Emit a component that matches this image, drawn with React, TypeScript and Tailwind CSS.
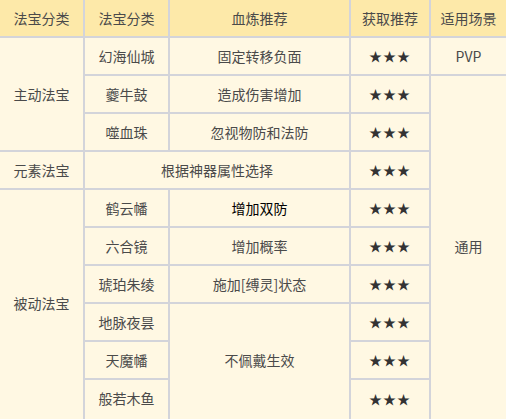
import React from "react";

const H = "bg-[#fde9a9] flex items-center justify-center";
const C = "bg-[#fff8e3] flex items-center justify-center";
const S = "text-[13px] tracking-[1px] text-[#333]";

export default function App() {
  return (
    <div
      className="w-[506px] h-[419px] overflow-hidden bg-[#fff8e3] text-[14px] text-[#4a4a4a]"
      style={{ fontFamily: '"Noto Sans CJK SC", "Noto Sans", sans-serif' }}
    >
      <div
        className="grid gap-[2px] bg-[#d3d4da]"
        style={{
          gridTemplateColumns: "83px 83px 179px 78px 1fr",
          gridTemplateRows: "36px repeat(10, 36px) 3px",
        }}
      >
        <div className={H}>法宝分类</div>
        <div className={H}>法宝分类</div>
        <div className={H}>血炼推荐</div>
        <div className={H}>获取推荐</div>
        <div className={H}>适用场景</div>

        {/* row 1 */}
        <div className={`${C} row-span-3`}>主动法宝</div>
        <div className={C}>幻海仙城</div>
        <div className={C}>固定转移负面</div>
        <div className={C}><span className={S}>★★★</span></div>
        <div className={C}>PVP</div>

        {/* row 2 */}
        <div className={C}>夔牛鼓</div>
        <div className={C}>造成伤害增加</div>
        <div className={C}><span className={S}>★★★</span></div>
        <div className={`${C} row-span-10`}>
          <span className="-mt-[4px]">通用</span>
        </div>

        {/* row 3 */}
        <div className={C}>噬血珠</div>
        <div className={C}>忽视物防和法防</div>
        <div className={C}><span className={S}>★★★</span></div>

        {/* row 4 */}
        <div className={C}>元素法宝</div>
        <div className={`${C} col-span-2`}>根据神器属性选择</div>
        <div className={C}><span className={S}>★★★</span></div>

        {/* row 5 */}
        <div className={`${C} row-span-7`}>
          <span className="-mt-[4px]">被动法宝</span>
        </div>
        <div className={C}>鹤云幡</div>
        <div className={`${C} text-black`}>增加双防</div>
        <div className={C}><span className={S}>★★★</span></div>

        {/* row 6 */}
        <div className={C}>六合镜</div>
        <div className={C}>增加概率</div>
        <div className={C}><span className={S}>★★★</span></div>

        {/* row 7 */}
        <div className={C}>琥珀朱绫</div>
        <div className={C}>施加[缚灵]状态</div>
        <div className={C}><span className={S}>★★★</span></div>

        {/* row 8 */}
        <div className={C}>地脉夜昙</div>
        <div className={`${C} row-span-4`}>
          <span className="-mt-[4px]">不佩戴生效</span>
        </div>
        <div className={C}><span className={S}>★★★</span></div>

        {/* row 9 */}
        <div className={C}>天魔幡</div>
        <div className={C}><span className={S}>★★★</span></div>

        {/* row 10 */}
        <div className={`${C} row-span-2`}>
          <span className="-mt-[4px]">般若木鱼</span>
        </div>
        <div className={`${C} row-span-2`}>
          <span className={`${S} -mt-[4px]`}>★★★</span>
        </div>
      </div>
    </div>
  );
}
